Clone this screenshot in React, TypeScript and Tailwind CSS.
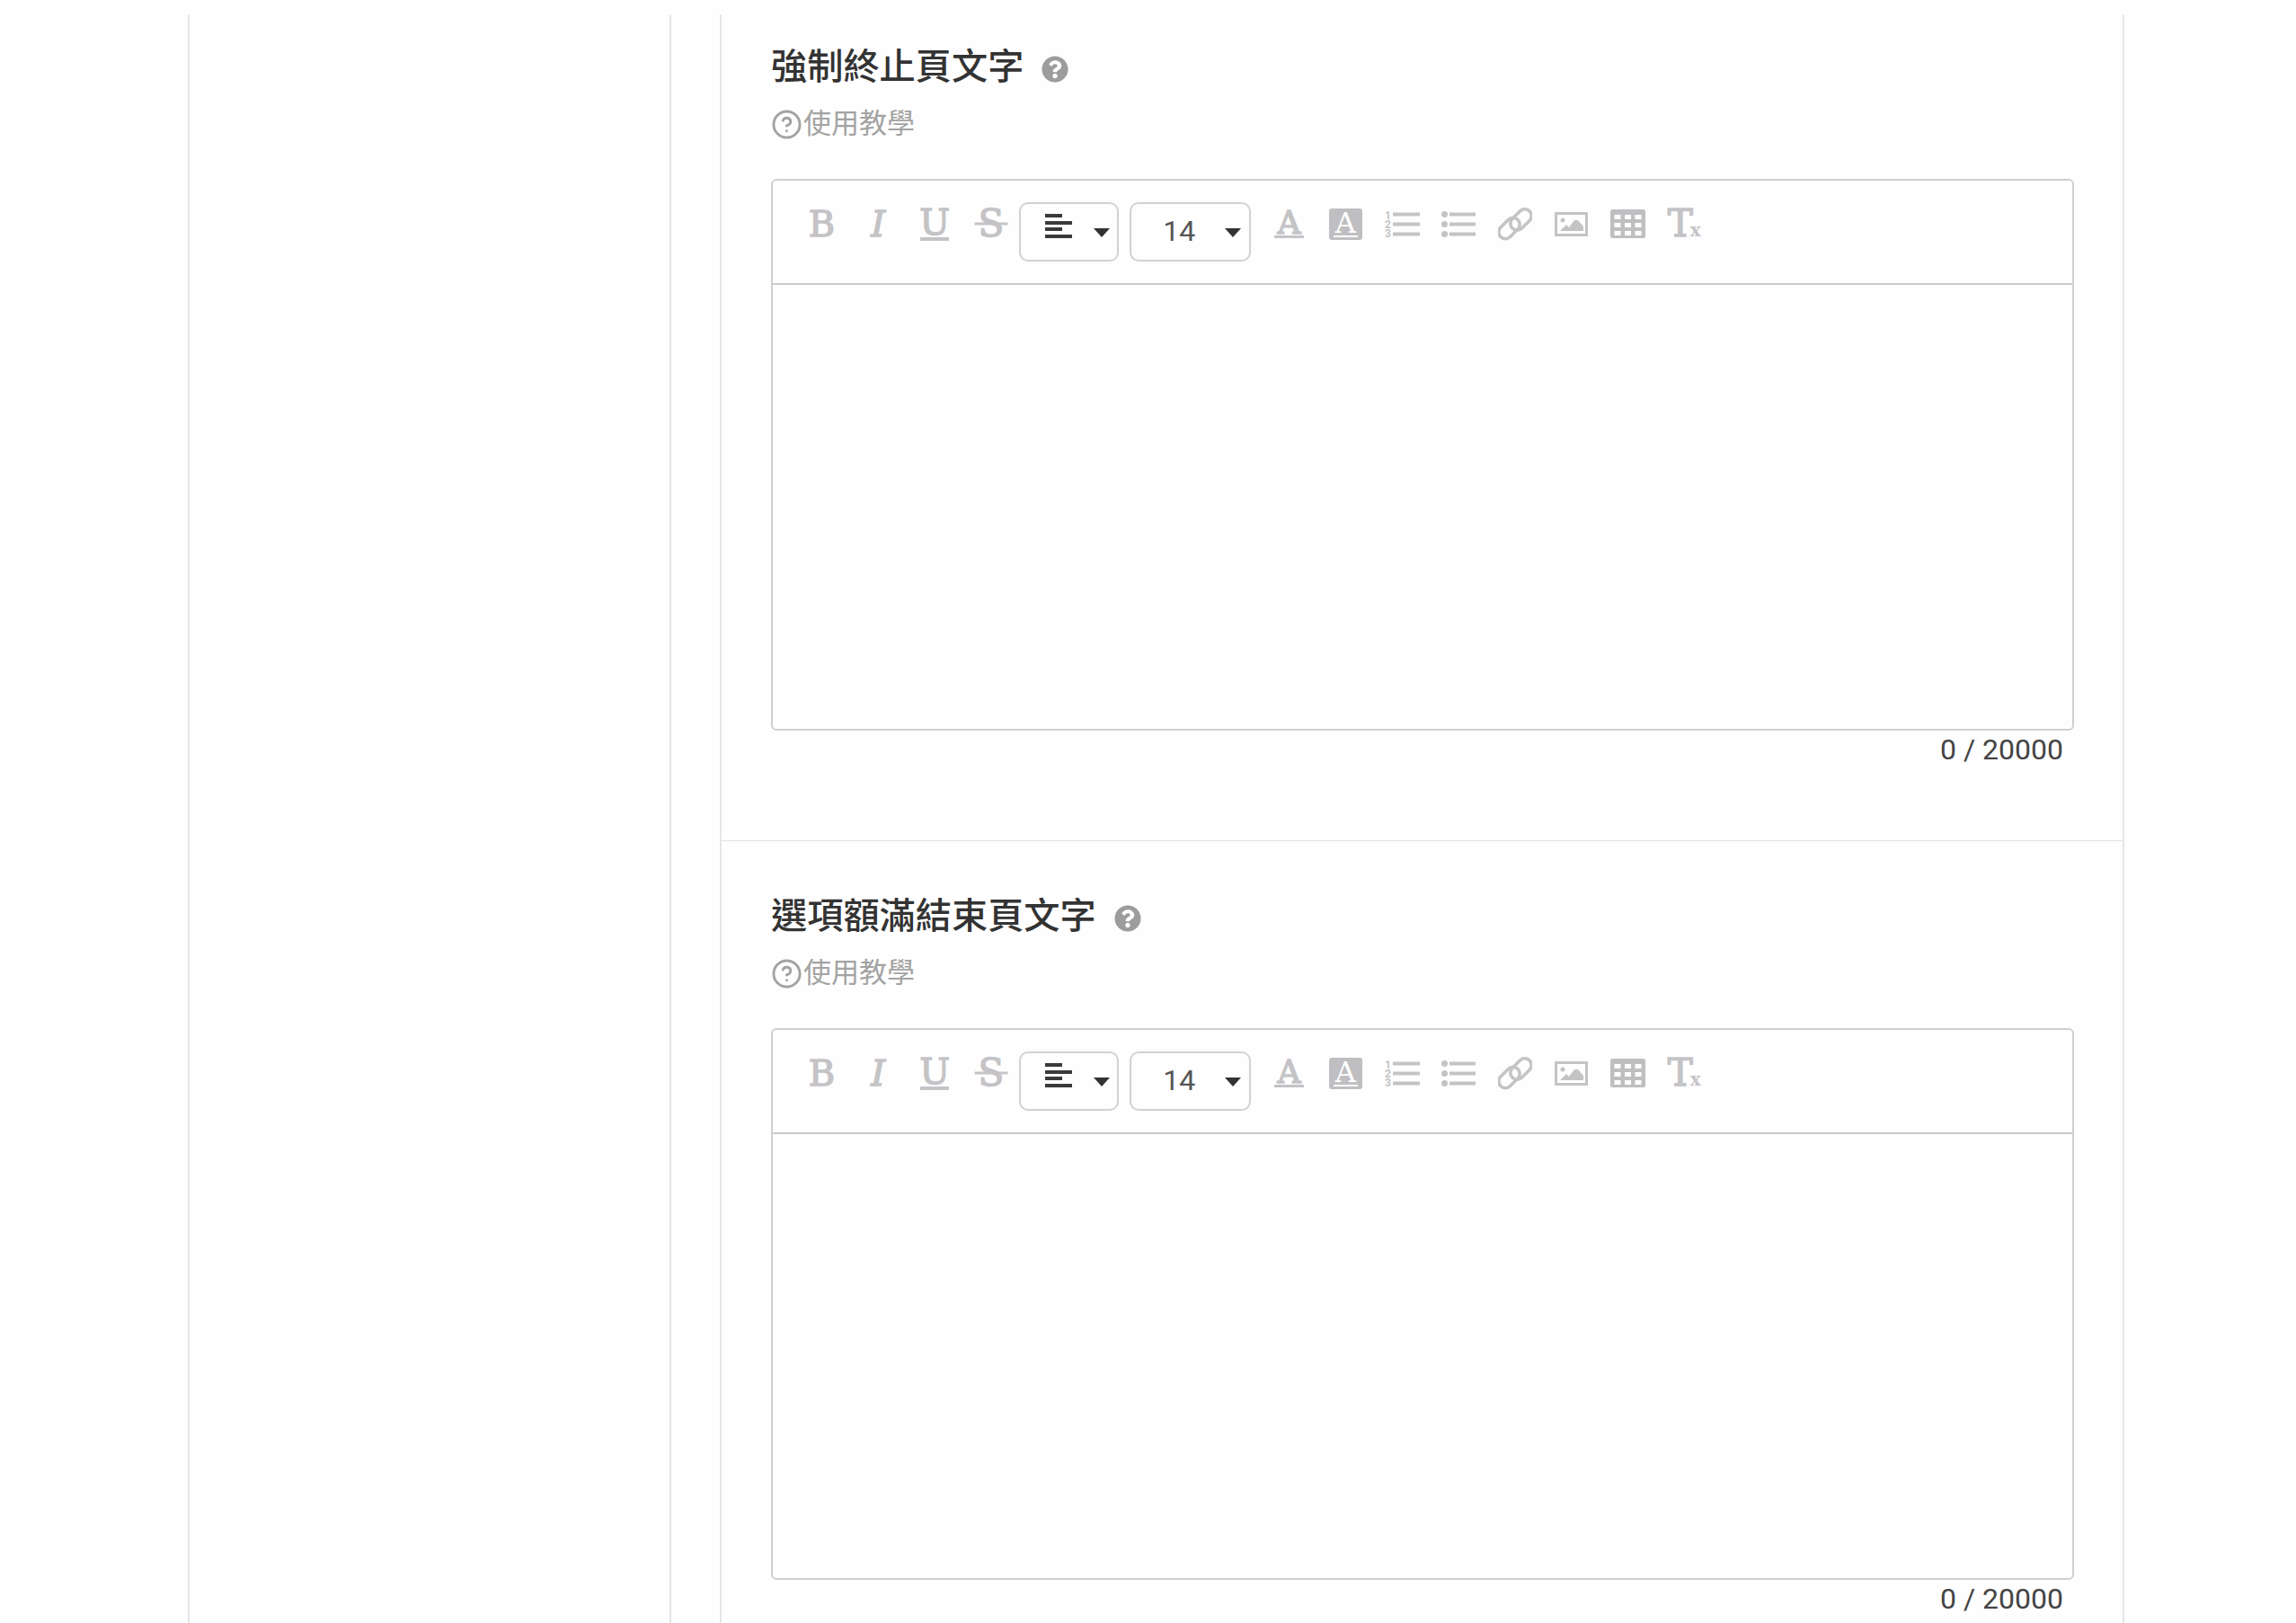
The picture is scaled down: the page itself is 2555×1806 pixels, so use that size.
import { CircleHelp } from 'lucide-react';
import { FaQuestionCircle } from 'react-icons/fa';

const SERIF = 'font-["DejaVu_Serif",serif]';
const HEAVY = '[-webkit-text-stroke:1.4px_#c4c3c6]';

function IconButton({ children }: { children: React.ReactNode }) {
  return (
    <span className="flex h-[66px] w-[62.8px] shrink-0 items-center justify-center pb-[18px] text-[#c4c3c6]">
      {children}
    </span>
  );
}

function Caret() {
  return <span className="mt-[2px] h-0 w-0 border-x-[9.5px] border-t-[10px] border-x-transparent border-t-[#333]" />;
}

function OrderedIcon() {
  return (
    <svg width="39" height="34" viewBox="0 0 39 34" fill="#c4c3c6" className="mt-[4px]">
      <text x="0" y="10" fontSize="12" fontWeight="700" fontFamily="Roboto, sans-serif">1</text>
      <text x="0" y="20" fontSize="12" fontWeight="700" fontFamily="Roboto, sans-serif">2</text>
      <text x="0" y="30" fontSize="12" fontWeight="700" fontFamily="Roboto, sans-serif">3</text>
      <rect x="9" y="2.5" width="30" height="4" />
      <rect x="9" y="13.5" width="30" height="4" />
      <rect x="9" y="24.5" width="30" height="4" />
    </svg>
  );
}

function BulletIcon() {
  return (
    <svg width="38" height="30" viewBox="0 0 38 30" fill="#c4c3c6">
      <circle cx="3.5" cy="4.5" r="3.5" />
      <circle cx="3.5" cy="15.5" r="3.5" />
      <circle cx="3.5" cy="26.5" r="3.5" />
      <rect x="9" y="2.5" width="29" height="4" />
      <rect x="9" y="13.5" width="29" height="4" />
      <rect x="9" y="24.5" width="29" height="4" />
    </svg>
  );
}

function LinkIcon() {
  return (
    <svg width="38" height="37" viewBox="0 0 38 37" fill="none" stroke="#c4c3c6" strokeWidth="3.6">
      <rect x="-1" y="15.5" width="27" height="15" rx="7.5" transform="rotate(-45 12.5 23)" />
      <rect x="12" y="6" width="27" height="15" rx="7.5" transform="rotate(-45 25.5 13.5)" />
    </svg>
  );
}

function ImageIcon() {
  return (
    <svg width="37" height="27" viewBox="0 0 37 27" fill="#c4c3c6">
      <rect x="1.5" y="1.5" width="34" height="24" fill="none" stroke="#c4c3c6" strokeWidth="3" />
      <circle cx="9" cy="9" r="2.5" />
      <path d="M6 21 L13 14 L16 17 L22 9 L26 9 L32 16 L32 21 Z" />
    </svg>
  );
}

function TableIcon() {
  return (
    <svg width="39" height="32" viewBox="0 0 39 32" fill="#fff">
      <rect width="39" height="32" rx="2.5" fill="#bfbec1" />
      {[6, 15, 24].map((y) =>
        [4.5, 16, 27.5].map((x) => <rect key={`${x}-${y}`} x={x} y={y} width="7" height="5" />),
      )}
    </svg>
  );
}

function Toolbar() {
  return (
    <div className="flex h-[116px] items-center border-b-2 border-[#cbcacd] pl-[23px]">
      <IconButton>
        <span className={`${SERIF} ${HEAVY} text-[40px] leading-none`}>B</span>
      </IconButton>
      <IconButton>
        <span className={`${SERIF} ${HEAVY} text-[40px] leading-none italic`}>I</span>
      </IconButton>
      <IconButton>
        <span className="flex flex-col items-center">
          <span className={`${SERIF} ${HEAVY} text-[40px] leading-[32px]`}>U</span>
          <span className="mt-[1px] h-[4px] w-[32px] bg-[#c4c3c6]" />
        </span>
      </IconButton>
      <IconButton>
        <span className="relative flex items-center justify-center">
          <span className={`${SERIF} ${HEAVY} text-[42px] leading-none`}>S</span>
          <span className="absolute top-1/2 left-1/2 h-[3px] w-[37px] -translate-x-1/2 -translate-y-1/2 bg-[#c4c3c6]" />
        </span>
      </IconButton>

      <div className="flex h-[66px] w-[111px] items-center justify-between rounded-[10px] border-2 border-[#d2d1d4] pr-[8px] pl-[27px]">
        <span className="mb-[13px] flex w-[30px] flex-col gap-[3.5px]">
          <span className="h-[4px] w-[19px] bg-[#3a3a3a]" />
          <span className="h-[4px] w-[30px] bg-[#3a3a3a]" />
          <span className="h-[4px] w-[19px] bg-[#3a3a3a]" />
          <span className="h-[4px] w-[30px] bg-[#3a3a3a]" />
        </span>
        <Caret />
      </div>
      <div className="ml-[12px] flex h-[66px] w-[135px] items-center justify-between rounded-[10px] border-2 border-[#d2d1d4] pr-[9px] pl-[35px]">
        <span className="-mt-[2px] font-['Roboto',sans-serif] text-[32px] leading-none text-[#555]">14</span>
        <Caret />
      </div>

      <span className="w-[11px] shrink-0" />
      <IconButton>
        <span className="flex flex-col items-center">
          <span className={`${SERIF} ${HEAVY} text-[36px] leading-[29px]`}>A</span>
          <span className="h-[3px] w-[33px] bg-[#c4c3c6]" />
        </span>
      </IconButton>
      <IconButton>
        <span className="flex h-[35px] w-[37px] flex-col items-center justify-center rounded-[3px] bg-[#bfbec1] text-white">
          <span className={`${SERIF} text-[32px] leading-[27px]`}>A</span>
          <span className="h-[2px] w-[27px] bg-white" />
        </span>
      </IconButton>
      <IconButton>
        <OrderedIcon />
      </IconButton>
      <IconButton>
        <BulletIcon />
      </IconButton>
      <IconButton>
        <LinkIcon />
      </IconButton>
      <IconButton>
        <ImageIcon />
      </IconButton>
      <IconButton>
        <TableIcon />
      </IconButton>
      <IconButton>
        <span className={`${SERIF} flex items-baseline leading-none`}>
          <span className={`${HEAVY} text-[42px]`}>T</span>
          <span className="-ml-[3px] text-[20px] font-bold">x</span>
        </span>
      </IconButton>
    </div>
  );
}

function EditorSection({ title, className }: { title: string; className: string }) {
  return (
    <section className={`border-b border-[#e2e1e3] pr-[54px] pb-[81px] pl-[55px] ${className}`}>
      <div className="flex items-center gap-[20px]">
        <h2 className="text-[40.2px] leading-[60px] font-medium text-[#333]">{title}</h2>
        <FaQuestionCircle size={30} className="mt-[3px] text-[#9c9c9c]" />
      </div>
      <p className="mt-[6px] flex items-center gap-px text-[31px] leading-[54px] text-[#a3a3a3]">
        <CircleHelp size={35} strokeWidth={2} />
        使用教學
      </p>
      <div className="mt-[34px] h-[614px] rounded-[6px] border-2 border-[#cfced1]">
        <Toolbar />
      </div>
      <p className="mt-px pr-[12px] text-right font-['Roboto',sans-serif] text-[32px] leading-[40px] text-[#444]">
        0 / 20000
      </p>
    </section>
  );
}

export default function App() {
  return (
    <div className="h-[1806px] overflow-hidden bg-[#fefefe] pt-4 font-['Roboto','Noto_Sans_CJK_TC',sans-serif]">
      <div className="flex h-full pl-[209px]">
        <aside className="h-full w-[538px] shrink-0 border-x-2 border-[#e6e5e7]" />
        <main className="ml-[54px] h-full w-[1563px] shrink-0 border-x-2 border-[#e6e5e7]">
          <EditorSection title="強制終止頁文字" className="pt-[29px]" />
          <EditorSection title="選項額滿結束頁文字" className="pt-[54px]" />
        </main>
      </div>
    </div>
  );
}
